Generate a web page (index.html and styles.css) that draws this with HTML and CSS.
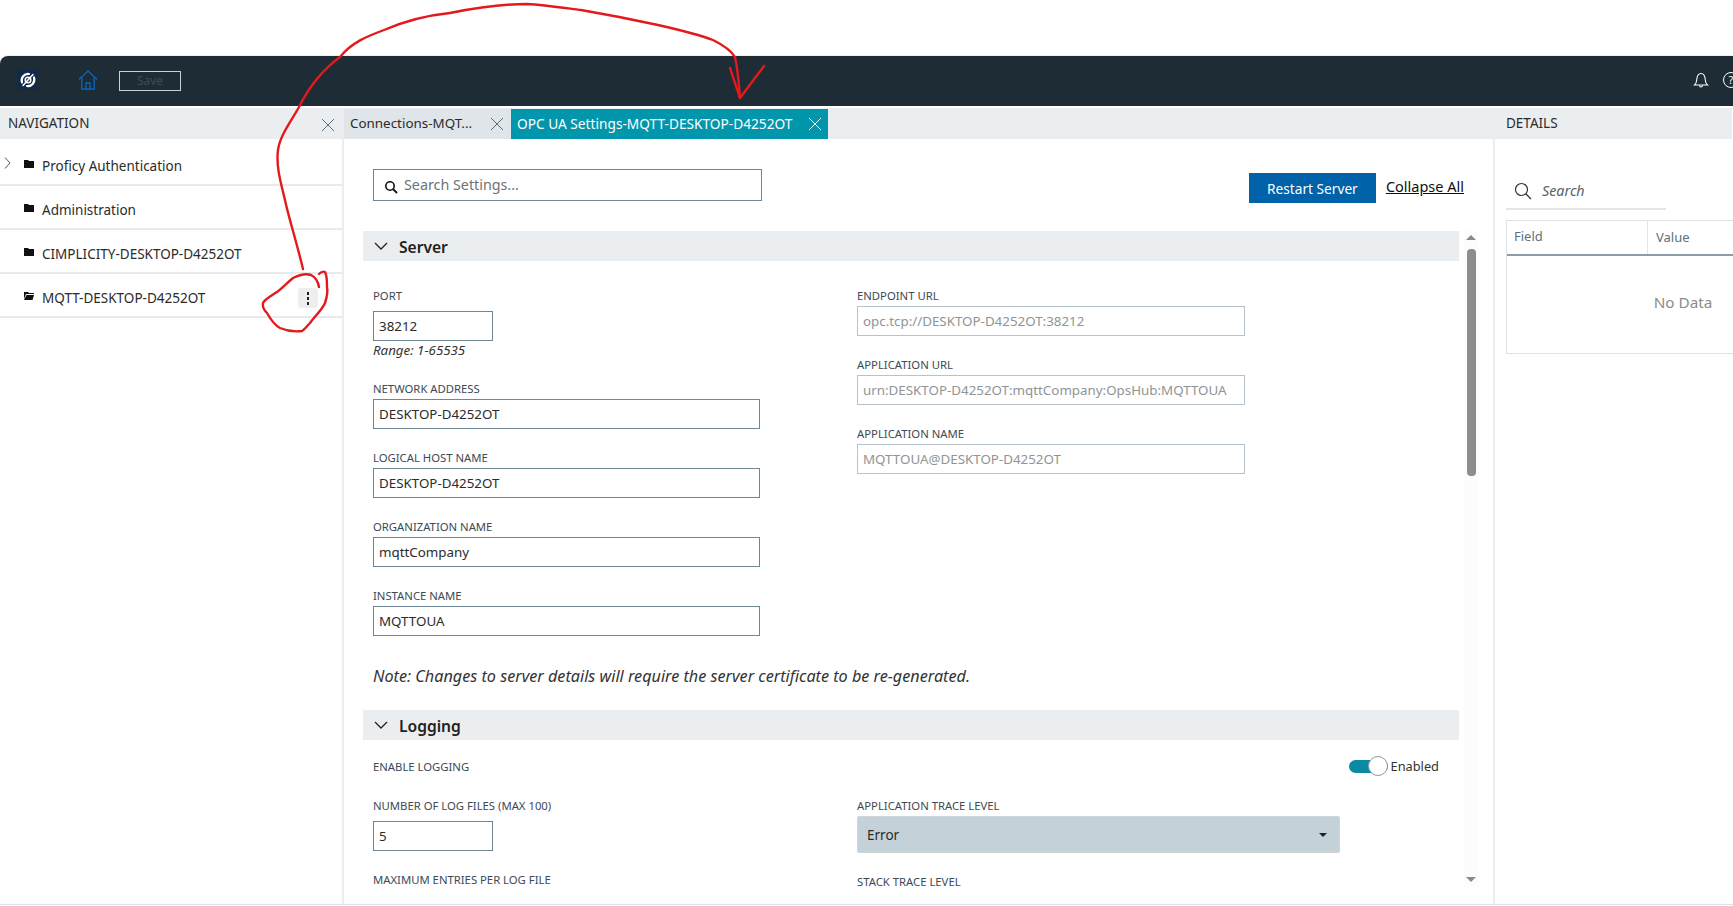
FILE: index.html
```html
<!DOCTYPE html>
<html lang="en">
<head>
<meta charset="utf-8">
<title>OPC UA Settings</title>
<link rel="stylesheet" href="styles.css">
</head>
<body>
<div class="app">
  <header class="topbar">
    <svg class="logo" viewBox="0 0 20 20" width="20" height="20"><rect width="20" height="20" fill="#12294a"/><g fill="none" stroke="#fff" stroke-linecap="round"><path d="M4 12.500a6.500 6.500 0 0 1 7-8.500" stroke-width="2.200"/><path d="M16 7.500a6.500 6.500 0 0 1-7 8.500" stroke-width="2.200"/><circle cx="10" cy="10" r="2.800" stroke-width="1.500"/><path d="M15 4.500L5 15.500" stroke-width="1.500"/></g></svg>
    <svg class="home" viewBox="0 0 20 20" width="20" height="20"><g fill="none" stroke="#0a62b5" stroke-width="1.400"><path d="M1 9.500L10 1l9 8.500"/><path d="M3.800 7.500V19h12.400V7.500"/><path d="M8 19v-6h4v6"/></g></svg>
    <button class="save">Save</button>
    <span class="spacer"></span>
    <svg class="bell" viewBox="0 0 16 16" width="16" height="16"><g fill="none" stroke="#fff" stroke-width="1.100"><path d="M1.500 13h13c-1.400-1-2-2.400-2.200-5C12 4 10.600 1.500 8 1.500S4 4 3.700 8c-.2 2.600-.8 4-2.200 5z"/><path d="M6.500 13.500a1.500 1.500 0 0 0 3 0"/></g></svg>
    <span class="help">?</span>
  </header>
  <div class="panels">
    <aside class="nav">
      <div class="panel-head nav-head"><span>NAVIGATION</span>
        <svg class="close" viewBox="0 0 12 12" width="12" height="12"><path d="M0 0l12 12M12 0L0 12" stroke="#5b6f7a" fill="none"/></svg>
      </div>
      <ul class="tree">
        <li class="tree-row">
          <svg class="chev-right" viewBox="0 0 7 12" width="7" height="12"><path d="M1 .5l5 5.500-5 5.500" fill="none" stroke="#555" stroke-width="1"/></svg>
          <svg class="folder" viewBox="0 0 10 10" width="10" height="10"><path d="M0 1h4l1 1h5v7H0z" fill="#111"/></svg>
          Proficy Authentication
        </li>
        <li class="tree-row">
          <svg class="folder" viewBox="0 0 10 10" width="10" height="10"><path d="M0 1h4l1 1h5v7H0z" fill="#111"/></svg>
          Administration
        </li>
        <li class="tree-row">
          <svg class="folder" viewBox="0 0 10 10" width="10" height="10"><path d="M0 1h4l1 1h5v7H0z" fill="#111"/></svg>
          CIMPLICITY-DESKTOP-D4252OT
        </li>
        <li class="tree-row">
          <svg class="folder" viewBox="0 0 10 10" width="10" height="10"><path d="M0 1h4l1 1h5v1H2L0 8zM2.500 4H10L8.500 9H0z" fill="#111"/></svg>
          MQTT-DESKTOP-D4252OT
          <span class="kebab"><i></i><i></i><i></i></span>
        </li>
      </ul>
    </aside>

    <main class="main">
      <div class="tabs">
        <div class="tab">
          <span class="tab-text">Connections-MQT...</span>
          <svg viewBox="0 0 12 12" width="12" height="12"><path d="M0 0l12 12M12 0L0 12" stroke="#5b6f7a" fill="none"/></svg>
        </div>
        <div class="tab tab-active">
          <span class="tab-text">OPC UA Settings-MQTT-DESKTOP-D4252OT</span>
          <svg viewBox="0 0 12 12" width="12" height="12"><path d="M0 0l12 12M12 0L0 12" stroke="#fff" fill="none"/></svg>
        </div>
      </div>
      <div class="toolbar">
        <div class="search-box">
          <svg viewBox="0 0 14 14" width="14" height="14"><circle cx="6" cy="6" r="4.200" fill="none" stroke="#111" stroke-width="1.600"/><path d="M9 9l4 4" stroke="#111" stroke-width="1.800"/></svg>
          <input class="search-input" placeholder="Search Settings...">
        </div>
        <span class="spacer"></span>
        <button class="restart">Restart Server</button>
        <a class="collapse" href="#">Collapse All</a>
      </div>
      <div class="scroller">
        <div class="content">
          <section>
            <h2 class="section-bar">
              <svg viewBox="0 0 14 8" width="14" height="8"><path d="M1 1l6 6 6-6" fill="none" stroke="#222" stroke-width="1.300"/></svg>
              <span class="section-title">Server</span>
            </h2>
            <div class="cols server-cols">
              <div class="col">
                <div class="field field-port">
                  <label>PORT</label>
                  <input class="text short" value="38212">
                  <em class="hint">Range: 1-65535</em>
                </div>
                <div class="field"><label>NETWORK ADDRESS</label><input class="text" value="DESKTOP-D4252OT"></div>
                <div class="field"><label>LOGICAL HOST NAME</label><input class="text" value="DESKTOP-D4252OT"></div>
                <div class="field"><label>ORGANIZATION NAME</label><input class="text" value="mqttCompany"></div>
                <div class="field"><label>INSTANCE NAME</label><input class="text" value="MQTTOUA"></div>
              </div>
              <div class="col">
                <div class="field"><label>ENDPOINT URL</label><input class="text ro" value="opc.tcp://DESKTOP-D4252OT:38212" readonly></div>
                <div class="field"><label>APPLICATION URL</label><input class="text ro" value="urn:DESKTOP-D4252OT:mqttCompany:OpsHub:MQTTOUA" readonly></div>
                <div class="field"><label>APPLICATION NAME</label><input class="text ro" value="MQTTOUA@DESKTOP-D4252OT" readonly></div>
              </div>
            </div>
            <p class="note">Note: Changes to server details will require the server certificate to be re-generated.</p>
          </section>
          <section>
            <h2 class="section-bar">
              <svg viewBox="0 0 14 8" width="14" height="8"><path d="M1 1l6 6 6-6" fill="none" stroke="#222" stroke-width="1.300"/></svg>
              <span class="section-title">Logging</span>
            </h2>
            <div class="enable-row">
              <label>ENABLE LOGGING</label>
              <span class="toggle-wrap"><span class="toggle"><span class="knob"></span></span>Enabled</span>
            </div>
            <div class="cols">
              <div class="col">
                <div class="field field-port"><label>NUMBER OF LOG FILES (MAX 100)</label><input class="text short" value="5"></div>
                <div class="field"><label>MAXIMUM ENTRIES PER LOG FILE</label></div>
              </div>
              <div class="col">
                <div class="field"><label>APPLICATION TRACE LEVEL</label>
                  <div class="select"><span>Error</span><span class="caret"></span></div>
                </div>
                <div class="field"><label>STACK TRACE LEVEL</label></div>
              </div>
            </div>
          </section>
        </div>
        <div class="scrollbar">
          <span class="arrow-up"></span>
          <span class="track"><span class="thumb"></span></span>
          <span class="arrow-down"></span>
        </div>
      </div>
    </main>

    <aside class="details">
      <div class="panel-head details-head">DETAILS</div>
      <div class="details-search">
        <svg viewBox="0 0 18 18" width="18" height="18"><circle cx="7.500" cy="7.500" r="6" fill="none" stroke="#333" stroke-width="1.200"/><path d="M12 12l5 5" stroke="#333" stroke-width="1.200"/></svg>
        <span>Search</span>
      </div>
      <div class="grid-table">
        <div class="grid-head"><span class="cell-field">Field</span><span class="cell-value">Value</span></div>
        <div class="grid-empty">No Data</div>
      </div>
    </aside>
  </div>
</div>
<svg class="ink" viewBox="0 0 1733 906" width="1733" height="906">
  <g fill="none" stroke="#e3191c" stroke-width="2.400" stroke-linecap="round" stroke-linejoin="round">
    <path d="M303 269C296 240 288 215 285 200C280 180 276 165 278 150C280 135 292 120 299 107C310 85 325 68 340 57C352 42 368 36 384 30C405 21 430 15 450 13C480 7 505 4 527 4C545 5 565 8 581 10C610 15 635 20 658 25C680 30 700 35 713 40C725 46 732 52 735 57C738 70 739 85 740 98"/>
    <path d="M730 68L740 98L764 66"/>
    <path d="M319 287C318 281 315 277 311 275C305 273 299 275 293 278C287 283 282 288 277 292C271 296 265 299 263 303C262 307 265 311 267 313C271 320 276 326 280 328C287 331 295 332 302 331C305 329 308 325 310 323C315 316 322 310 325 303C327 297 328 292 327 287C327 281 327 275 325 272C323 271 321 272 319 274"/>
  </g>
</svg>
</body>
</html>
```

FILE: styles.css
```css
* { box-sizing: border-box; }
html, body { margin: 0; padding: 0; height: 100%; }
body {
  background: #fff;
  overflow: hidden;
  font-family: "Noto Sans", "Liberation Sans", sans-serif;
  font-size: 13.500px;
  color: #2b2b2b;
  position: relative;
}
.app {
  margin-top: 56px;
  height: 849px;
  width: 1733px;
  display: flex;
  flex-direction: column;
  border-bottom: 1px solid #dfe3e6;
  box-shadow: 0 -1px 0 #eee;
  border-top-left-radius: 8px;
}
.spacer { flex: 1; }

/* top bar */
.topbar {
  height: 50px;
  flex: none;
  margin-bottom: 2px;
  background: #1e2c35;
  border-top-left-radius: 8px;
  display: flex;
  align-items: center;
  padding-left: 18px;
  overflow: hidden;
  color: #fff;
}
.logo { margin-top: -3px; }
.home { margin: -3px 0 0 40px; }
.save {
  margin: -1px 0 0 21px;
  width: 62px;
  height: 20px;
  padding: 0;
  background: transparent;
  border: 1px solid #c5d1d8;
  color: #3d4c57;
  font: 12px "Noto Sans", sans-serif;
}
.bell { margin: -3px 0 0 0; }
.help {
  flex: none;
  width: 16px;
  height: 16px;
  margin: -3px -6px 0 14px;
  border: 1px solid #fff;
  border-radius: 50%;
  font-size: 11px;
  line-height: 14px;
  text-align: center;
}

/* panels */
.panels { flex: 1; min-height: 0; display: flex; }
.panel-head {
  height: 31px;
  padding-bottom: 2px;
  background: #ebeef1;
  display: flex;
  align-items: center;
  color: #2b2b2b;
}
.nav {
  width: 344px;
  flex: none;
  border-right: 2px solid #ebeef1;
}
.nav-head { justify-content: space-between; padding: 0 8px 2px 8px; }
.close { margin-top: 4px; }
.tree { list-style: none; margin: 0; padding: 0; }
.tree-row {
  height: 44px;
  padding: 6px 0 0 42px;
  display: flex;
  align-items: center;
  position: relative;
  border-bottom: 2px solid #e8eaec;
}
.tree-row:first-child { height: 47px; padding-top: 9px; }
.chev-right { position: absolute; left: 4px; top: 18px; }
.folder { position: absolute; left: 24px; top: 17px; }
.tree-row:first-child .folder { top: 20px; }
.kebab {
  position: absolute;
  left: 298px;
  top: 14px;
  width: 20px;
  height: 20px;
  background: #eeeeee;
  border-radius: 3px;
  display: flex;
  flex-direction: column;
  align-items: center;
  justify-content: center;
  gap: 2px;
}
.kebab i { width: 2px; height: 3px; background: #222; }

/* main */
.main {
  width: 1150px;
  flex: none;
  display: flex;
  flex-direction: column;
  min-height: 0;
}
.tabs {
  height: 31px;
  flex: none;
  background: #ebeef1;
  display: flex;
  padding-top: 1px;
}
.tab {
  width: 167px;
  background: #dfe5e8;
  display: flex;
  align-items: center;
  justify-content: space-between;
  padding: 0 8px 2px 6px;
  white-space: nowrap;
  font-size: 13.400px;
}
.tab svg { margin-top: 2px; }
.tab-active {
  width: 317px;
  background: #0296ad;
  color: #fff;
  padding: 0 7px 2px 6px;
  font-size: 13.700px;
}
.toolbar {
  height: 92px;
  flex: none;
  display: flex;
  align-items: flex-start;
  padding: 30px 30px 0 29px;
}
.search-box {
  width: 389px;
  height: 32px;
  border: 1px solid #6f8794;
  display: flex;
  align-items: center;
  padding-left: 10px;
}
.search-box svg { margin-top: 4px; flex: none; }
.search-input {
  border: 0;
  outline: 0;
  flex: 1;
  min-width: 0;
  margin: -2px 0 0 6px;
  padding: 0;
  height: 26px;
  font: 14.300px "Noto Sans", sans-serif;
  color: #2b2b2b;
}
.search-input::placeholder { color: #6b7479; opacity: 1; }
.restart {
  width: 127px;
  height: 30px;
  margin-top: 4px;
  padding: 0;
  border: 0;
  background: #0062a8;
  color: #fff;
  font: 13.700px "Noto Sans", sans-serif;
}
.collapse {
  margin: 7px 0 0 10px;
  color: #111;
  text-decoration: underline;
  font-size: 14.500px;
}

/* scroller */
.scroller { flex: 1; min-height: 0; display: flex; padding-left: 19px; }
.content { width: 1096px; flex: none; overflow: hidden; }
.section-bar {
  margin: 0;
  height: 30px;
  background: #ebeef1;
  display: flex;
  align-items: center;
  gap: 11px;
  padding-left: 11px;
  font-size: 15.600px;
  font-weight: 600;
  color: #222;
}
.section-title { position: relative; top: 1px; }
.cols { display: flex; padding-left: 10px; }
.server-cols { padding-top: 27px; }
.col { width: 484px; flex: none; display: flex; flex-direction: column; }
.field { display: flex; flex-direction: column; margin-bottom: 21px; }
.field label, .enable-row label {
  height: 16px;
  line-height: 16px;
  font-size: 11.300px;
  color: #3c4a55;
  margin-bottom: 2px;
  white-space: nowrap;
}
.field-port label { margin-bottom: 7px; }
.field-port { margin-bottom: 21px; }
.field-port .hint { margin-bottom: 2px; }
.text {
  width: 387px;
  height: 30px;
  border: 1px solid #6f8794;
  padding: 0 5px;
  font: 13.350px "Noto Sans", sans-serif;
  color: #2b2b2b;
  outline: 0;
}
.short { width: 120px; }
.ro { width: 388px; border-color: #b7c3ca; color: #8f9496; }
.hint { font-size: 13.300px; line-height: 16px; margin-top: 1px; color: #333; }
.note {
  margin: 9px 0 24px;
  padding-left: 10px;
  height: 20px;
  line-height: 20px;
  font-size: 16.200px;
  font-style: italic;
  color: #333;
}
.enable-row {
  display: flex;
  justify-content: space-between;
  align-items: center;
  height: 20px;
  margin: 16px 20px 22px 10px;
}
.enable-row label { margin: 2px 0 0; }
.toggle-wrap { display: flex; align-items: center; gap: 3px; font-size: 12.800px; color: #333; }
.toggle {
  position: relative;
  width: 39px;
  height: 13px;
  background: #0a8aa3;
  border-radius: 7px;
}
.knob {
  position: absolute;
  right: 0;
  top: -4px;
  width: 20px;
  height: 20px;
  background: #fff;
  border: 1px solid #8a99a2;
  border-radius: 50%;
}
.select {
  width: 483px;
  height: 37px;
  background: #c5d1d8;
  border: 1px solid #cfd6da;
  border-radius: 2px;
  display: flex;
  align-items: center;
  justify-content: space-between;
  padding: 0 12px 0 9px;
  color: #2b2b2b;
}
.caret {
  width: 0;
  height: 0;
  border: 4.500px solid transparent;
  border-top: 4.500px solid #222;
  border-bottom: 0;
}
.scrollbar {
  width: 14px;
  margin: 0 0 17px 5px;
  flex: none;
  display: flex;
  flex-direction: column;
  align-items: center;
  background: #fcfcfc;
}
.arrow-up, .arrow-down {
  flex: none;
  width: 0;
  height: 0;
  border-left: 5px solid transparent;
  border-right: 5px solid transparent;
}
.arrow-up { margin-top: 4px; border-bottom: 5px solid #8a8a8a; }
.arrow-down { border-top: 5px solid #8a8a8a; margin-bottom: 5px; }
.track { flex: 1; width: 9px; padding-top: 9px; }
.thumb { display: block; width: 9px; height: 227px; background: #8d8d8d; border-radius: 4px; }

/* details */
.details {
  flex: none;
  width: 239px;
  margin-left: -1px;
  border-left: 2px solid #ebeef1;
  margin-right: -200px;
}
.details-head { padding-left: 11px; }
.details-search {
  width: 160px;
  height: 39px;
  margin: 32px 0 0 11px;
  border-bottom: 2px solid #e3e6e8;
  display: flex;
  align-items: center;
  gap: 10px;
  padding: 2px 0 0 8px;
  font-style: italic;
  font-size: 14.300px;
  color: #55626b;
}
.grid-table {
  width: 354px;
  height: 134px;
  margin: 10px 0 0 11px;
  border: 1px solid #dfe3e6;
  font-size: 13px;
  color: #5f6f79;
}
.grid-head {
  height: 35px;
  display: flex;
  align-items: center;
  border-bottom: 2px solid #8b9da8;
}
.cell-field {
  width: 141px;
  height: 33px;
  line-height: 31px;
  padding-left: 7px;
  border-right: 1px solid #e3e6e8;
}
.cell-value { padding-left: 8px; margin-top: -2px; }
.grid-empty {
  height: 91px;
  display: flex;
  align-items: center;
  justify-content: center;
  font-size: 15.300px;
  color: #8c8c8c;
}

/* hand-drawn annotation */
.ink { position: absolute; left: 0; top: 0; pointer-events: none; }
```
